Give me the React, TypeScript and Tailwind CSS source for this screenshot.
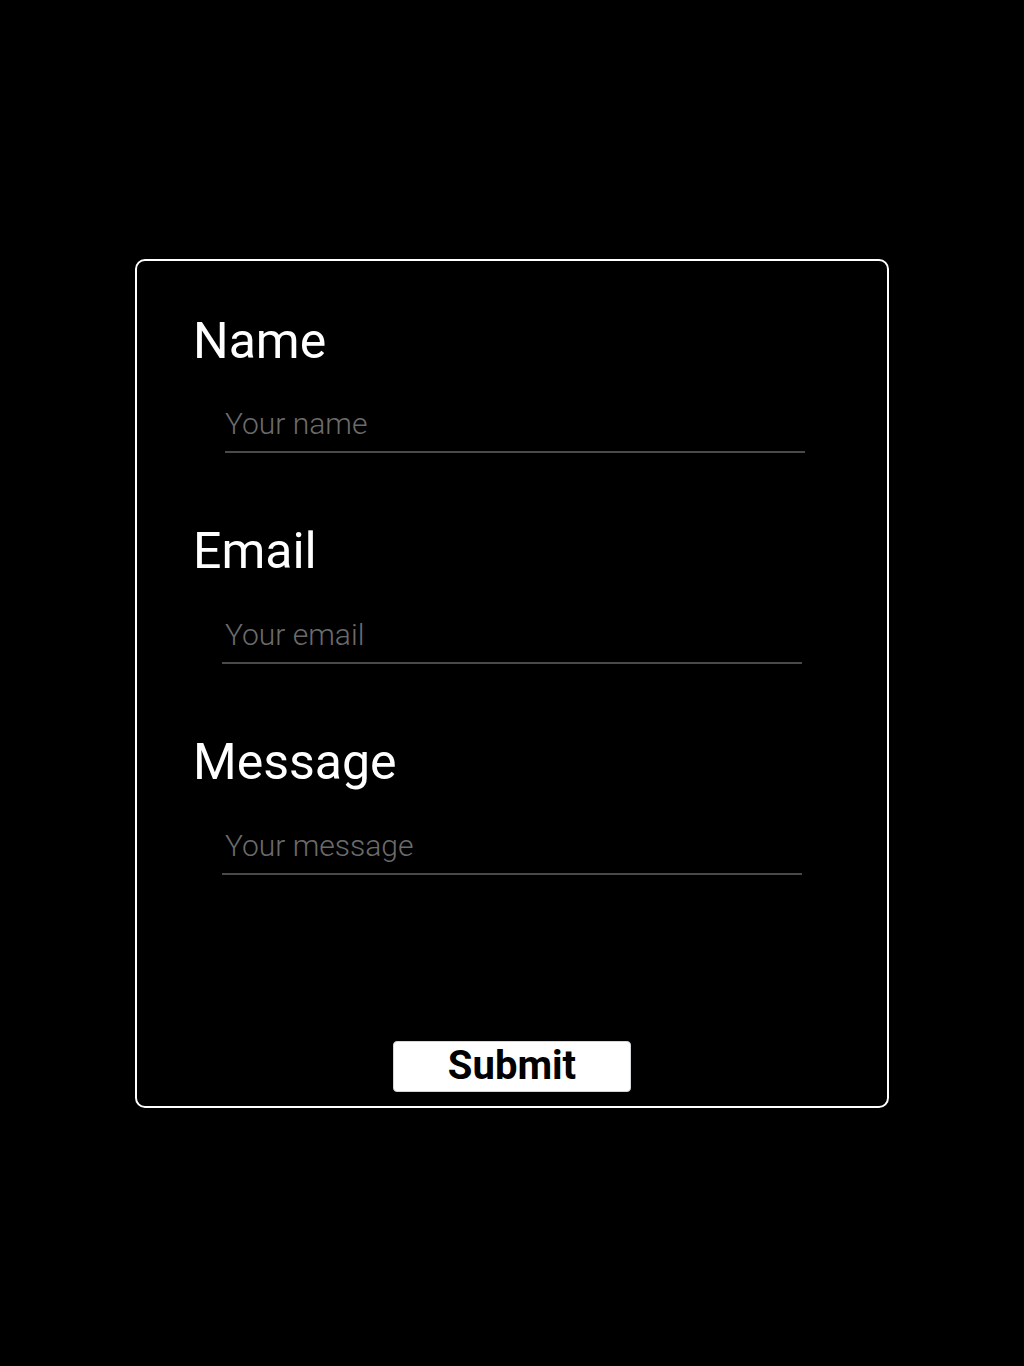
export default function App() {
  return (
    <div
      className="flex min-h-screen items-center justify-center bg-black"
      style={{ fontFamily: "Roboto, 'Liberation Sans', sans-serif" }}
    >
      <form className="flex h-[849px] w-[754px] flex-col rounded-[10px] border-2 border-white pl-14 pt-[52px] pb-[14px]">
        {/* Name */}
        <label className="block text-[50px] leading-[56px] text-white">Name</label>
        <input
          type="text"
          placeholder="Your name"
          className="ml-[32px] mt-[28px] h-[56px] w-[580px] border-b-2 border-[#4a4a4a] bg-transparent p-0 text-[30px] font-light text-white outline-none placeholder:text-[#6b6b6b]"
        />

        {/* Email */}
        <label className="mt-[70px] block text-[50px] leading-[56px] text-white">Email</label>
        <input
          type="email"
          placeholder="Your email"
          className="ml-[29px] mt-[29px] h-[56px] w-[580px] border-b-2 border-[#4a4a4a] bg-transparent py-0 pl-[3px] text-[30px] font-light text-white outline-none placeholder:text-[#6b6b6b]"
        />

        {/* Message */}
        <label className="mt-[70px] block text-[50px] leading-[56px] text-white">Message</label>
        <input
          type="text"
          placeholder="Your message"
          className="ml-[29px] mt-[29px] h-[56px] w-[580px] border-b-2 border-[#4a4a4a] bg-transparent py-0 pl-[3px] text-[30px] font-light text-white outline-none placeholder:text-[#6b6b6b]"
        />

        <div className="mt-auto flex justify-center pr-14">
          <button
            type="button"
            className="flex h-[51px] w-[238px] items-center justify-center rounded-[4px] border border-gray-300 bg-white text-[40px] font-bold leading-none text-black"
          >
            Submit
          </button>
        </div>
      </form>
    </div>
  );
}
